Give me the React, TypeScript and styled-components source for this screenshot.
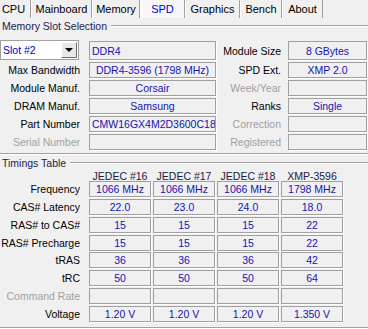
import React from "react";
import styled, { createGlobalStyle } from "styled-components";

const Global = createGlobalStyle`
  body {
    margin: 0;
    background: #f0f0f0;
    font-family: "Liberation Sans", Arial, sans-serif;
    font-size: 10.5px;
    color: #000;
  }
`;

const Page = styled.div`
  width: 368px;
  height: 329px;
  overflow: hidden;
  background: #f0f0f0;
`;

const TabBar = styled.div`
  display: flex;
  height: 18px;
`;

const Tab = styled.div<{ $w: number; $active?: boolean; $first?: boolean }>`
  box-sizing: border-box;
  width: ${(p) => p.$w}px;
  margin-left: ${(p) => (p.$first ? "-4px" : "0")};
  display: flex;
  align-items: center;
  justify-content: center;
  color: ${(p) => (p.$active ? "#0000c8" : "#000")};
  background: ${(p) => (p.$active ? "#f7f7f7" : "#f0f0f0")};
  border-left: 1px solid #ffffff;
  border-right: 1px solid #a0a0a0;
  font-size: 11px;
  padding-bottom: 1px;
`;

const Group = styled.div<{ $top: number }>`
  margin-top: ${(p) => p.$top}px;
  border-bottom: 1px solid #a0a0a0;
  box-shadow: 0 1px 0 #ffffff;
`;

const Legend = styled.div`
  display: flex;
  align-items: center;
  height: 14px;
  color: #202050;
  padding-left: 2px;
  gap: 4px;
`;

const Rule = styled.div`
  flex: 1;
  height: 0;
  border-top: 1px solid #a0a0a0;
  border-bottom: 1px solid #ffffff;
`;

const SlotGrid = styled.div`
  display: grid;
  grid-template-columns: 89px 127px 72px 79px;
  grid-template-rows: 21px;
  grid-auto-rows: 16px;
  row-gap: 2px;
  margin-top: 6px;
  padding-bottom: 3px;
`;

const Label = styled.div<{ $pad: number; $dim?: boolean; $low?: boolean }>`
  display: flex;
  align-items: center;
  justify-content: flex-end;
  padding-right: ${(p) => p.$pad}px;
  padding-top: ${(p) => (p.$low ? "3px" : "0")};
  color: ${(p) => (p.$dim ? "#a0a0a0" : "#000")};
  white-space: nowrap;
`;

const Field = styled.div<{ $left?: boolean; $tall?: boolean }>`
  box-sizing: border-box;
  height: ${(p) => (p.$tall ? "19px" : "16px")};
  align-self: end;
  display: flex;
  align-items: center;
  justify-content: ${(p) => (p.$left ? "flex-start" : "center")};
  padding: 0 2px;
  border: 1px solid #a0a0a0;
  box-shadow: 1px 1px 0 #ffffff;
  color: #1414b4;
  white-space: nowrap;
  overflow: hidden;
`;

const Row = styled.div`
  display: contents;
`;

const SelectCell = styled.div`
  display: flex;
  align-items: flex-end;
`;

const Select = styled.div`
  box-sizing: border-box;
  width: 79px;
  height: 20px;
  display: flex;
  align-items: center;
  justify-content: space-between;
  background: #ffffff;
  border: 1px solid #a0a0a0;
  padding-left: 2px;
  color: #0000c8;
`;

const DropBtn = styled.div`
  box-sizing: border-box;
  width: 16px;
  height: 16px;
  margin-right: 1px;
  display: flex;
  align-items: center;
  justify-content: center;
  background: #e8e8e8;
  border: 1px solid;
  border-color: #ffffff #707070 #707070 #ffffff;
`;

const Arrow = styled.div`
  width: 0;
  height: 0;
  border-left: 4px solid transparent;
  border-right: 4px solid transparent;
  border-top: 4px solid #000;
`;

const TimingWrap = styled.div`
  padding-bottom: 5px;
`;

const TimingGrid = styled.div`
  display: grid;
  grid-template-columns: 87px repeat(4, 62px);
  column-gap: 2px;
  grid-auto-rows: 16px;
  row-gap: 1.86px;
`;

const Head = styled.div`
  display: grid;
  grid-template-columns: 87px repeat(4, 62px);
  column-gap: 2px;
  height: 11px;
  align-items: center;
  color: #202040;
  & > div {
    text-align: center;
    white-space: nowrap;
  }
`;

const slotRows: [string, string, boolean, string, string, boolean][] = [
  ["Max Bandwidth", "DDR4-3596 (1798 MHz)", false, "SPD Ext.", "XMP 2.0", false],
  ["Module Manuf.", "Corsair", false, "Week/Year", "", true],
  ["DRAM Manuf.", "Samsung", false, "Ranks", "Single", false],
  ["Part Number", "CMW16GX4M2D3600C18", false, "Correction", "", true],
  ["Serial Number", "", true, "Registered", "", true],
];

const timings: [string, string[], boolean?][] = [
  ["Frequency", ["1066 MHz", "1066 MHz", "1066 MHz", "1798 MHz"]],
  ["CAS# Latency", ["22.0", "23.0", "24.0", "18.0"]],
  ["RAS# to CAS#", ["15", "15", "15", "22"]],
  ["RAS# Precharge", ["15", "15", "15", "22"]],
  ["tRAS", ["36", "36", "36", "42"]],
  ["tRC", ["50", "50", "50", "64"]],
  ["Command Rate", ["", "", "", ""], true],
  ["Voltage", ["1.20 V", "1.20 V", "1.20 V", "1.350 V"]],
];

const tabs = [
  { t: "CPU", w: 35 },
  { t: "Mainboard", w: 61 },
  { t: "Memory", w: 48 },
  { t: "SPD", w: 45, active: true },
  { t: "Graphics", w: 55 },
  { t: "Bench", w: 42 },
  { t: "About", w: 41 },
];

export default function App() {
  return (
    <Page>
      <Global />
      <TabBar>
        {tabs.map((tb, i) => (
          <Tab key={tb.t} $w={tb.w} $active={tb.active} $first={i === 0}>
            {tb.t}
          </Tab>
        ))}
      </TabBar>

      <Group $top={1}>
        <Legend>
          Memory Slot Selection
          <Rule />
        </Legend>
        <SlotGrid>
          <Row>
            <SelectCell>
              <Select>
                Slot #2
                <DropBtn>
                  <Arrow />
                </DropBtn>
              </Select>
            </SelectCell>
            <Field $left $tall>
              DDR4
            </Field>
            <Label $pad={7} $low>
              Module Size
            </Label>
            <Field $tall>8 GBytes</Field>
          </Row>
          {slotRows.map((r) => (
            <Row key={r[0]}>
              <Label $pad={9} $dim={r[2]}>
                {r[0]}
              </Label>
              <Field $left={r[1].startsWith("CMW")}>{r[1]}</Field>
              <Label $pad={7} $dim={r[5]}>
                {r[3]}
              </Label>
              <Field>{r[4]}</Field>
            </Row>
          ))}
        </SlotGrid>
      </Group>

      <Group $top={2}>
        <Legend>
          Timings Table
          <Rule />
        </Legend>
        <TimingWrap>
          <Head>
            <div />
            <div>JEDEC #16</div>
            <div>JEDEC #17</div>
            <div>JEDEC #18</div>
            <div>XMP-3596</div>
          </Head>
          <TimingGrid>
            {timings.map((r) => (
              <Row key={r[0]}>
                <Label $pad={7} $dim={r[2]}>
                  {r[0]}
                </Label>
                {r[1].map((v, i) => (
                  <Field key={i}>{v}</Field>
                ))}
              </Row>
            ))}
          </TimingGrid>
        </TimingWrap>
      </Group>
    </Page>
  );
}
